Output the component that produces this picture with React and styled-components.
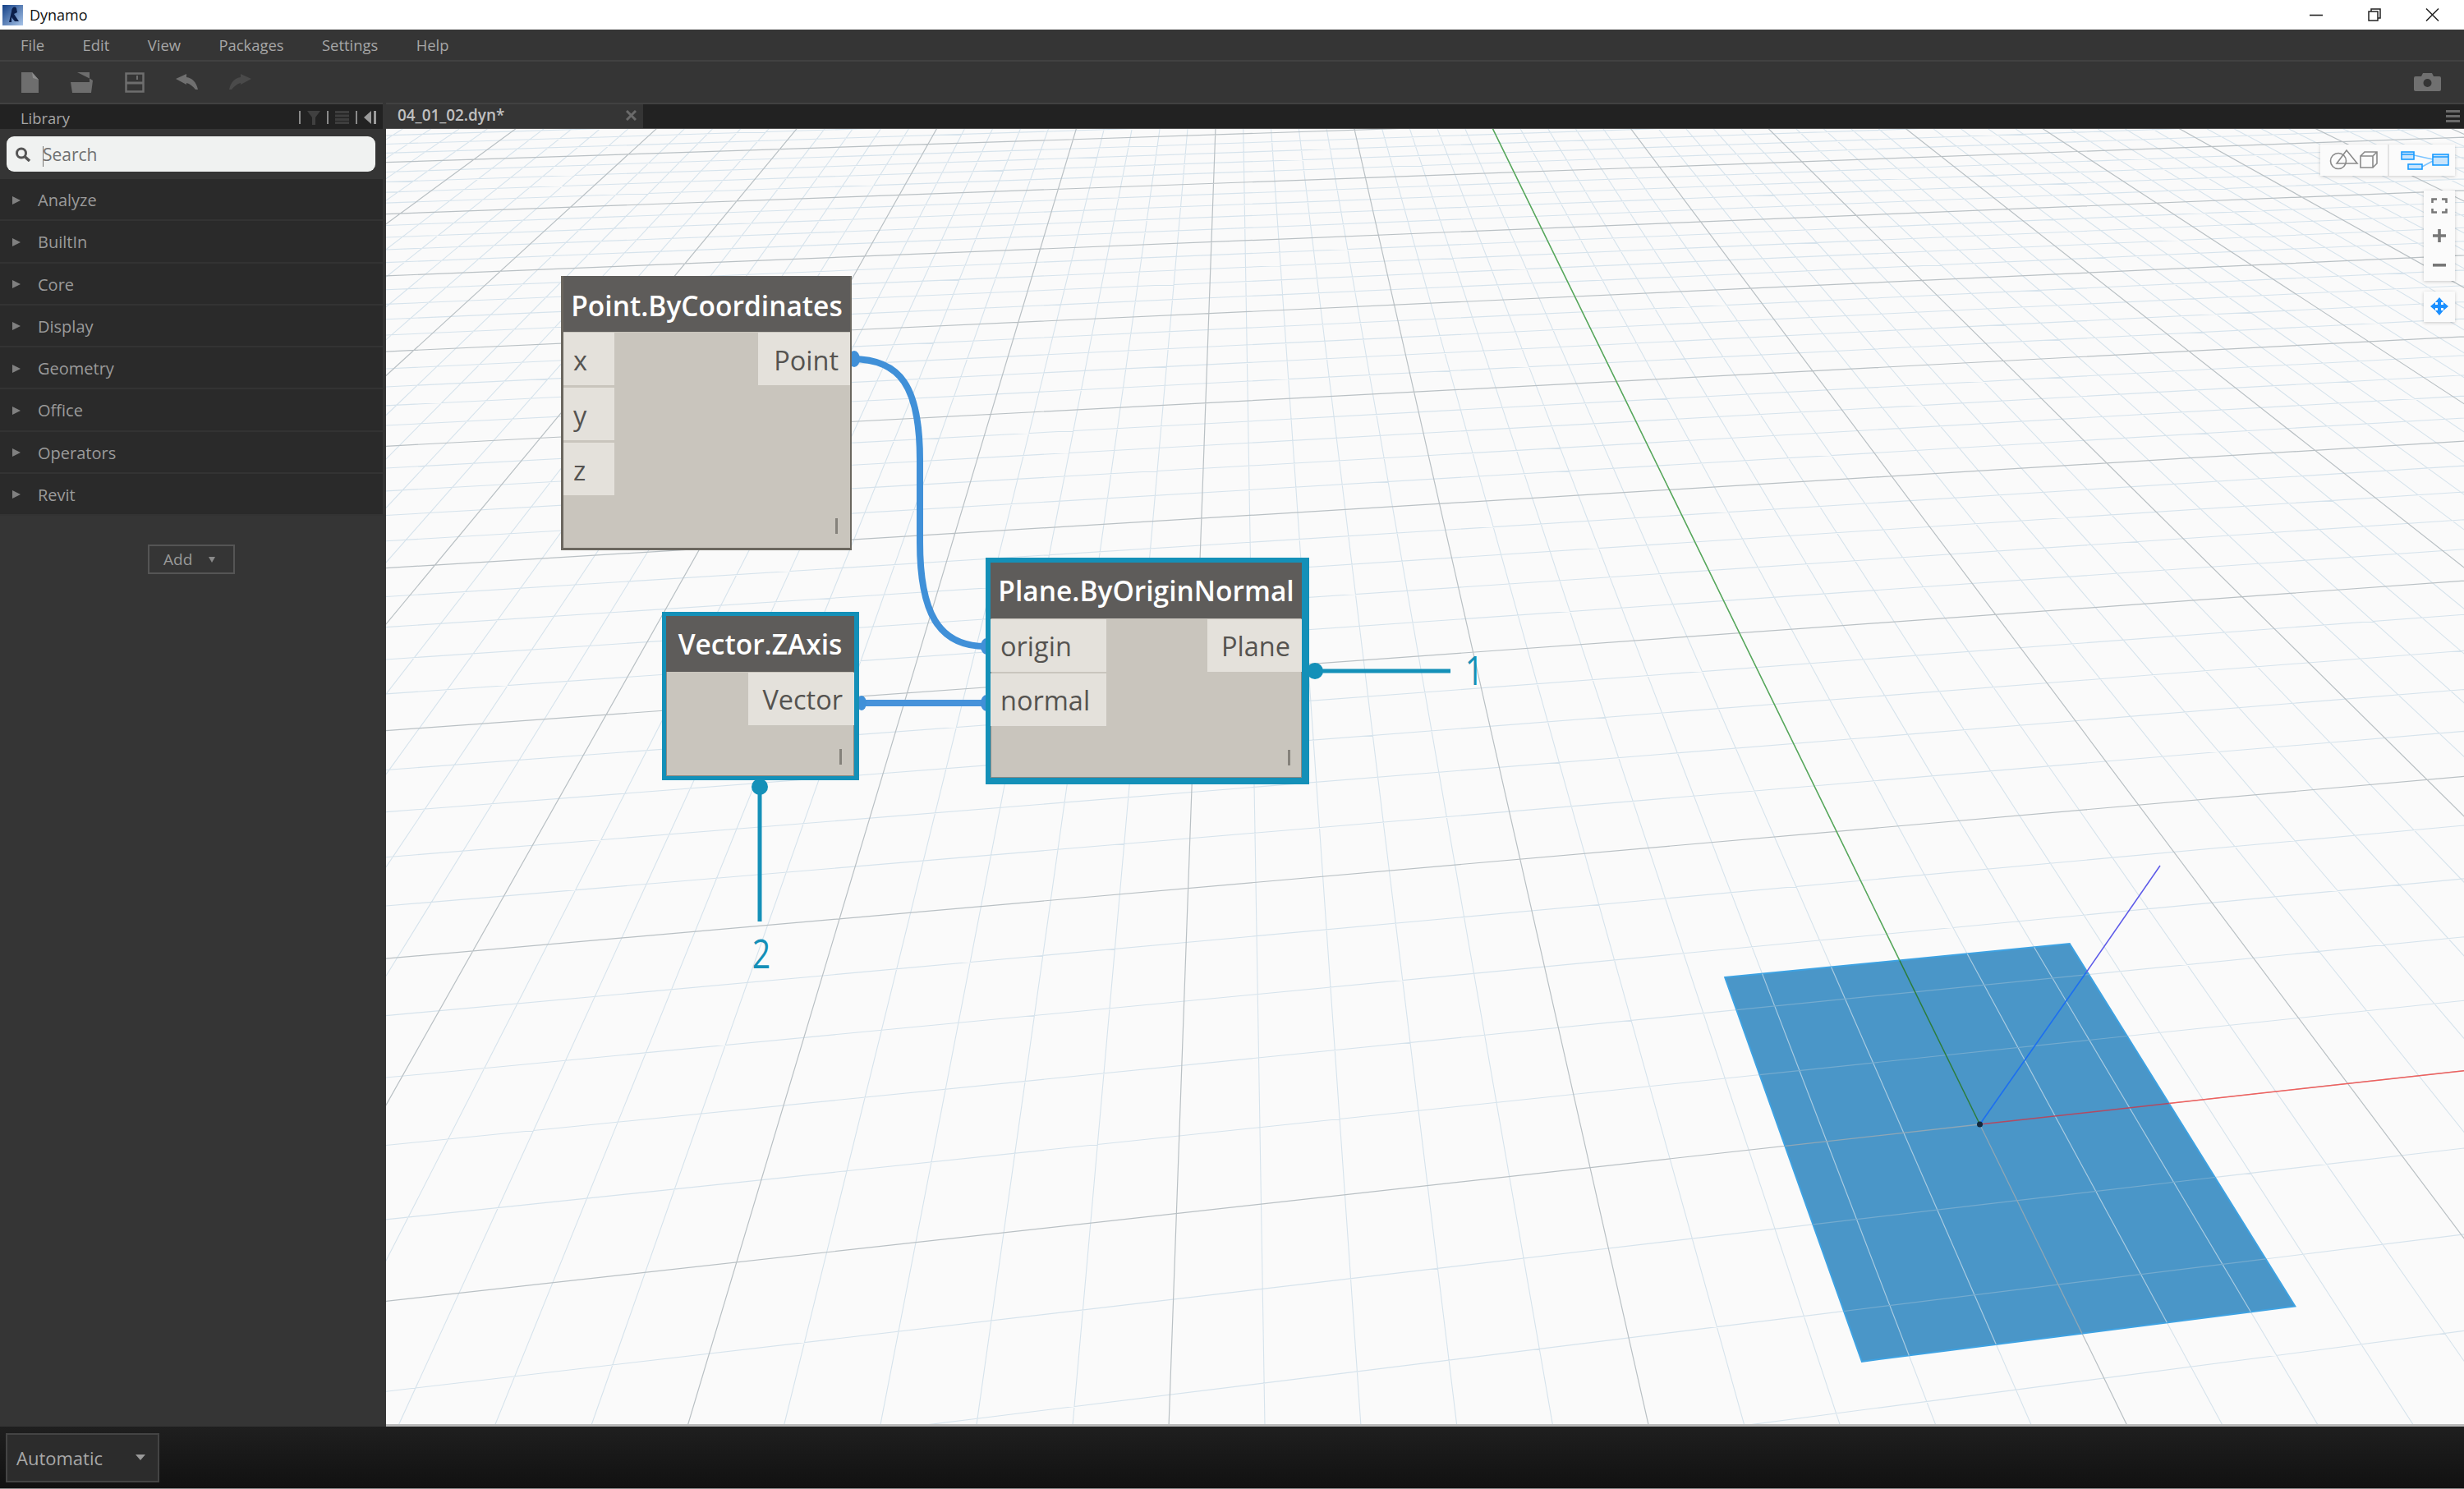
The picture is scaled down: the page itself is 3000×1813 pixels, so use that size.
import React from 'react'
import styled, { createGlobalStyle } from 'styled-components'

const GlobalStyle = createGlobalStyle`
  html, body {
    margin: 0;
    padding: 0;
    background: #1a1a1a;
  }
  * {
    box-sizing: border-box;
  }
`

const FONT = `"Open Sans", "Noto Sans", sans-serif`
const CANVAS_X = 470
const CANVAS_Y = 157

const Page = styled.div`
  display: flex;
  flex-direction: column;
  width: 3000px;
  height: 1813px;
  overflow: hidden;
  font-family: ${FONT};
`

const TitleBar = styled.div`
  display: flex;
  align-items: center;
  flex: 0 0 36px;
  background: #fff;
  padding-left: 3px;
`

const AppName = styled.span`
  margin-left: 8px;
  font-size: 18px;
  color: #111;
`

const WindowButtons = styled.div`
  display: flex;
  gap: 54px;
  margin-left: auto;
  padding-right: 30px;
`

const MenuBar = styled.nav`
  display: flex;
  align-items: center;
  gap: 46.5px;
  flex: 0 0 39px;
  padding-left: 25px;
  background: #353535;
  border-bottom: 2px solid #414141;
`

const MenuItem = styled.span`
  font-size: 18.4px;
  color: #a6a6a6;
`

const ToolBar = styled.div`
  display: flex;
  align-items: center;
  flex: 0 0 50px;
  padding: 0 28px 0 4px;
  background: #353535;
`

const ToolButton = styled.div`
  display: flex;
  align-items: center;
  justify-content: center;
  width: 64px;
  height: 100%;
`

const CameraButton = styled.div`
  display: flex;
  align-items: center;
  margin-left: auto;
`

const Workspace = styled.div`
  display: flex;
  flex: 1;
  min-height: 0;
`

const Sidebar = styled.aside`
  flex: 0 0 470px;
  display: flex;
  flex-direction: column;
  background: #353535;
`

const LibraryHeader = styled.div`
  display: flex;
  align-items: center;
  flex: 0 0 32px;
  width: 466px;
  padding: 2px 8px 0 25px;
  background: #222;
  border-top: 2px solid #414141;
`

const LibraryTitle = styled.span`
  font-size: 18.4px;
  color: #a6a6a6;
`

const LibraryTools = styled.div`
  display: flex;
  align-items: center;
  gap: 8px;
  margin-left: auto;
`

const ToolDivider = styled.span`
  width: 2px;
  height: 16px;
  background: #8a8a8a;
`

const SearchWell = styled.div`
  width: 466px;
  padding: 9px 9px 9px 8px;
`

const SearchBox = styled.div`
  position: relative;
  display: flex;
  align-items: center;
  height: 43px;
  padding-left: 10px;
  border-radius: 9px;
  background: #f0f2f1;
`

const SearchText = styled.span`
  margin-left: 14px;
  font-size: 21px;
  color: #6f7070;
`

const Caret = styled.span`
  position: absolute;
  left: 44px;
  top: 12px;
  width: 1px;
  height: 25px;
  background: #777;
`

const CategoryList = styled.div`
  display: flex;
  flex-direction: column;
  width: 466px;
`

const CategoryRow = styled.div`
  display: flex;
  align-items: center;
  height: 51.25px;
  padding: 2px 0 0 15px;
  background: #2a2a2a;
  border-bottom: 2px solid #333;
  font-size: 20px;
  color: #9a9a9a;
`

const Arrow = styled.span`
  width: 0;
  height: 0;
  margin-right: 21px;
  border-top: 5px solid transparent;
  border-bottom: 5px solid transparent;
  border-left: 10px solid #808080;
`

const AddButton = styled.div`
  display: flex;
  align-items: center;
  justify-content: space-between;
  align-self: flex-start;
  width: 106px;
  height: 36px;
  margin: 35px 0 0 180px;
  padding: 0 22px 0 17px;
  border: 2px solid #555;
  font-size: 19px;
  color: #999;
`

const SmallCaret = styled.span`
  width: 0;
  height: 0;
  border-left: 4px solid transparent;
  border-right: 4px solid transparent;
  border-top: 7px solid #8a8a8a;
`

const Main = styled.main`
  flex: 1;
  display: flex;
  flex-direction: column;
  min-width: 0;
`

const TabStrip = styled.div`
  display: flex;
  flex: 0 0 32px;
  background: #222;
  border-top: 2px solid #414141;
  border-bottom: 1px solid #505050;
`

const Tab = styled.div`
  display: flex;
  align-items: center;
  justify-content: space-between;
  width: 313px;
  padding: 0 8px 3px 14px;
  background: #353535;
  font-size: 18.9px;
  font-weight: 600;
  color: #c0c0c0;
`

const TabMenu = styled.div`
  display: flex;
  flex-direction: column;
  gap: 3px;
  margin: 7px 5px 0 auto;
`

const TabMenuBar = styled.span`
  display: block;
  width: 17px;
  height: 3px;
  background: #6a6a6a;
`

const Canvas = styled.div`
  position: relative;
  flex: 1;
  overflow: hidden;
  background: #fafafa;
  border-bottom: 3px solid #b9b9b9;
`

const SceneLayer = styled.svg`
  position: absolute;
  left: 0;
  top: 0;
  width: 2530px;
  height: 1578px;
`

const CanvasTools = styled.div`
  position: absolute;
  top: 19px;
  right: 11px;
  display: flex;
  flex-direction: column;
  align-items: flex-end;
`

const ViewSwitch = styled.div`
  display: flex;
  width: 164px;
  height: 38px;
  background: #fbfbfb;
  box-shadow: 0 1px 4px rgba(0, 0, 0, 0.18);
`

const ViewOption = styled.div`
  display: flex;
  flex: 1;
  border-left: ${(p) => (p.$divided ? '2px solid #e3e3e3' : 'none')};
`

const ZoomGroup = styled.div`
  display: flex;
  flex-direction: column;
  width: 38px;
  margin-top: 18px;
  background: #fbfbfb;
  box-shadow: 0 1px 4px rgba(0, 0, 0, 0.2);
`

const ZoomButton = styled.div`
  display: flex;
  align-items: center;
  justify-content: center;
  height: 36.6px;
`

const PanButton = styled(ZoomButton)`
  width: 38px;
  height: 37px;
  margin-top: 13px;
  background: #fbfbfb;
  box-shadow: 0 1px 4px rgba(0, 0, 0, 0.2);
`

const Node = styled.div`
  position: absolute;
  left: ${(p) => p.$x - CANVAS_X}px;
  top: ${(p) => p.$y - CANVAS_Y}px;
  width: ${(p) => p.$w}px;
  height: ${(p) => p.$h}px;
  display: flex;
  flex-direction: column;
  background: #c9c5bd;
  border-style: solid;
  border-color: ${(p) => (p.$selected ? '#1490b8' : '#6b675f')};
  border-width: ${(p) => p.$border};
  box-shadow: ${(p) => (p.$selected ? 'inset 0 0 0 1px #8d8a83' : 'none')};
`

const NodeTitle = styled.div`
  display: flex;
  align-items: center;
  justify-content: center;
  flex: 0 0 68px;
  padding-top: ${(p) => p.$nudge || 0}px;
  background: #5e5c5a;
  font-size: 33.5px;
  font-weight: 600;
  color: #fff;
  white-space: nowrap;
`

const NodeBody = styled.div`
  display: flex;
  justify-content: space-between;
  flex: 1;
  padding-top: 1px;
`

const PortColumn = styled.div`
  display: flex;
  flex-direction: column;
  gap: ${(p) => p.$gap}px;
  width: ${(p) => p.$w}px;
`

const Port = styled.div`
  display: flex;
  align-items: center;
  justify-content: ${(p) => (p.$output ? 'flex-end' : 'flex-start')};
  height: 64px;
  padding: ${(p) => p.$nudge || 0}px 14px 0 12px;
  background: #e4e1db;
  font-size: 32.5px;
  color: #555350;
`

const LacingMark = styled.span`
  position: absolute;
  right: ${(p) => p.$right}px;
  bottom: ${(p) => p.$bottom}px;
  width: 3px;
  height: 19px;
  background: #85827b;
`

const Callout = styled.span`
  position: absolute;
  left: ${(p) => p.$x - CANVAS_X}px;
  top: ${(p) => p.$y - CANVAS_Y}px;
  transform: translate(-50%, -50%) scaleX(0.8);
  font-size: 49px;
  font-weight: 400;
  line-height: 1;
  color: #1490b8;
`

const StatusBar = styled.footer`
  display: flex;
  align-items: center;
  flex: 0 0 76px;
  padding-left: 7px;
  background: linear-gradient(#1f1f1f, #111);
  border-bottom: 1px solid #888;
`

const RunSelect = styled.div`
  display: flex;
  align-items: center;
  justify-content: space-between;
  width: 187px;
  height: 60px;
  padding: 0 15px 0 11px;
  background: #2c2c2c;
  border: 2px solid #444;
  font-size: 22px;
  color: #a8a8a8;
`

const RunCaret = styled.span`
  width: 0;
  height: 0;
  border-left: 6px solid transparent;
  border-right: 6px solid transparent;
  border-top: 7px solid #9a9a9a;
`

// perspective of the ground plane: origin and its two vanishing points
const ORIGIN = [2410.5, 1369]
const VP_X = [18356, -400]
const VP_Y = [1503, -486]
const CELL_X = 0.00578
const CELL_Y = 0.0476
const PLANE_HALF = 2.535

function project(u, v) {
  const a = u * CELL_X
  const b = v * CELL_Y
  const w = 1 + a + b
  return [(ORIGIN[0] + a * VP_X[0] + b * VP_Y[0]) / w, (ORIGIN[1] + a * VP_X[1] + b * VP_Y[1]) / w]
}

function seg(u1, v1, u2, v2) {
  const [x1, y1] = project(u1, v1)
  const [x2, y2] = project(u2, v2)
  return `M${x1.toFixed(1)} ${y1.toFixed(1)}L${x2.toFixed(1)} ${y2.toFixed(1)}`
}

function buildGrid() {
  let minor = ''
  let major = ''
  for (let u = -60; u <= 60; u++) {
    const d = seg(u, -8, u, 50)
    if (u % 5 === 0) major += d
    else minor += d
  }
  for (let v = -8; v <= 50; v++) {
    const d = seg(-60, v, 60, v)
    if (v % 5 === 0) major += d
    else minor += d
  }
  return { minor, major }
}

const grid = buildGrid()
const H = PLANE_HALF

const planeOutline = [project(-H, H), project(H, H), project(H, -H), project(-H, -H)]
  .map((p) => p.map((n) => n.toFixed(1)).join(','))
  .join(' ')

const planeCellsU = [-2, -1, 1, 2].map((u) => seg(u, -H, u, H)).join('')
const planeCellsV = [-2, -1, 1, 2].map((v) => seg(-H, v, H, v)).join('')

function Scene() {
  return (
    <SceneLayer viewBox={`${CANVAS_X} ${CANVAS_Y} 2530 1578`}>
      <path d={grid.minor} stroke="#d6e3ec" strokeWidth="1.1" fill="none" />
      <path d={grid.major} stroke="#b9c0c4" strokeWidth="1.2" fill="none" />

      <polygon points={planeOutline} fill="#4a96c8" stroke="#3ea2e2" strokeWidth="2" />
      <path d={planeCellsU} stroke="#a8cbe2" strokeWidth="1.2" fill="none" />
      <path d={planeCellsV} stroke="#74abcf" strokeWidth="1.2" fill="none" />
      <path d={seg(0, -H, 0, 0) + seg(-H, 0, 0, 0)} stroke="#8fa7b6" strokeWidth="1.3" fill="none" />

      <path d={seg(0, 0, 0, H)} stroke="#2c7d3c" strokeWidth="1.5" fill="none" />
      <path d={seg(0, H, 0, 50)} stroke="#56a95a" strokeWidth="1.5" fill="none" />
      <path d={seg(0, 0, H, 0)} stroke="#b24a62" strokeWidth="1.5" fill="none" />
      <path d={seg(H, 0, 60, 0)} stroke="#f0605e" strokeWidth="1.5" fill="none" />
      <path d="M2410.5 1369L2540 1184" stroke="#1c6ff0" strokeWidth="1.6" fill="none" />
      <path d="M2540 1184L2630 1054" stroke="#5b58e8" strokeWidth="1.5" fill="none" />
      <circle cx="2410.5" cy="1369" r="3.5" fill="#10283c" />

      <path
        d="M1037 437C1096 437 1120 470 1120 560L1120 660C1120 745 1142 787 1200 787"
        stroke="#4090d8"
        strokeWidth="8"
        fill="none"
      />
      <path d="M1046 856L1200 856" stroke="#4692da" strokeWidth="8" fill="none" />
      <ellipse cx="1040" cy="437" rx="7" ry="10" fill="#4090d8" />
      <ellipse cx="1201" cy="787" rx="7" ry="10" fill="#4090d8" />
      <ellipse cx="1049" cy="856" rx="6" ry="9" fill="#4090d8" />
      <ellipse cx="1201" cy="856" rx="7" ry="10" fill="#4090d8" />

      <path d="M1594 817L1766 817M925 950L925 1122" stroke="#1490b8" strokeWidth="5" fill="none" />
      <circle cx="1601" cy="817" r="10" fill="#1490b8" />
      <circle cx="925" cy="958" r="10" fill="#1490b8" />
    </SceneLayer>
  )
}

function DynamoLogo() {
  return (
    <svg width="25" height="25" viewBox="0 0 25 25">
      <defs>
        <linearGradient id="logoFill" x1="0" y1="0" x2="1" y2="1">
          <stop offset="0" stopColor="#123f86" />
          <stop offset="1" stopColor="#a8c4e8" />
        </linearGradient>
      </defs>
      <rect width="25" height="25" fill="url(#logoFill)" />
      <path d="M8 21L11 8C11 3 15 1 17 4L18 9L14 11L20 20L15 20L11 15L11 21Z" fill="#0c1f4a" />
    </svg>
  )
}

function WindowIcons() {
  return (
    <WindowButtons>
      <svg width="18" height="16" viewBox="0 0 18 16">
        <path d="M1 8.5H17" stroke="#222" strokeWidth="1.6" />
      </svg>
      <svg width="16" height="16" viewBox="0 0 16 16" fill="none" stroke="#222" strokeWidth="1.5">
        <rect x="1" y="4" width="11" height="11" />
        <path d="M4 4V1H15V12H12" />
      </svg>
      <svg width="17" height="16" viewBox="0 0 17 16" fill="none" stroke="#222" strokeWidth="1.5">
        <path d="M1 0.5L16 15.5M16 0.5L1 15.5" />
      </svg>
    </WindowButtons>
  )
}

function NewIcon() {
  return (
    <svg width="21" height="25" viewBox="0 0 21 25">
      <path d="M0 0H13L21 9V25H0Z" fill="#6e6e6e" />
      <path d="M13 0L21 9L14 7Z" fill="#8d8d8d" />
    </svg>
  )
}

function OpenIcon() {
  return (
    <svg width="28" height="25" viewBox="0 0 28 25">
      <path d="M8 0H23V8H14V12H0L2 25H25L27 10L24 8Z" fill="#6e6e6e" />
      <path d="M14 8H23V12H14Z" fill="#353535" />
    </svg>
  )
}

function SaveIcon() {
  return (
    <svg width="24" height="25" viewBox="0 0 24 25" fill="none" stroke="#6e6e6e" strokeWidth="2.5">
      <rect x="1.5" y="1.5" width="21" height="22" />
      <path d="M1.5 13H22.5" strokeWidth="3" />
      <path d="M15 4V9" strokeWidth="2" />
    </svg>
  )
}

function UndoIcon({ flip, color }) {
  return (
    <svg width="28" height="20" viewBox="0 0 28 20" style={flip ? { transform: 'scaleX(-1)' } : undefined}>
      <path d="M0 6L13 0L13 4C20 5 25 10 27 19L24 19C21 15 17 12 13 11L13 13Z" fill={color} />
    </svg>
  )
}

function CameraIcon() {
  return (
    <svg width="33" height="22" viewBox="0 0 33 22">
      <path
        d="M2 4H9L11 0H22L24 4H31Q33 4 33 6V20Q33 22 31 22H2Q0 22 0 20V6Q0 4 2 4Z"
        fill="#707070"
      />
      <circle cx="16.5" cy="12" r="5" fill="#353535" />
    </svg>
  )
}

function SearchIcon() {
  return (
    <svg width="20" height="18" viewBox="0 0 20 18" fill="none" stroke="#555" strokeWidth="3">
      <circle cx="8" cy="7.5" r="5.5" />
      <path d="M12 11.5L18 17" strokeWidth="3.5" />
    </svg>
  )
}

function FilterIcon() {
  return (
    <svg width="16" height="17" viewBox="0 0 16 17">
      <path d="M0 0H16L10 8V17H6V8Z" fill="#404040" />
    </svg>
  )
}

function ListIcon() {
  return (
    <svg width="17" height="16" viewBox="0 0 17 16">
      <path d="M0 0H17V3H0ZM0 4.500H17V7.500H0ZM0 9H17V12H0ZM0 13H17V16H0Z" fill="#3e3e3e" />
    </svg>
  )
}

function CollapseIcon() {
  return (
    <svg width="15" height="16" viewBox="0 0 15 16">
      <path d="M9 0V16L0 8Z" fill="#9a9a9a" />
      <rect x="12" y="0" width="3" height="16" fill="#9a9a9a" />
    </svg>
  )
}

function GeometryIcon() {
  return (
    <svg width="82" height="38" viewBox="0 0 82 38" fill="none" stroke="#8a8a8a" strokeWidth="1.6">
      <circle cx="22" cy="20" r="9.5" />
      <path d="M20 23L32 7L45 23Z" />
      <path d="M49 14H64V28H49ZM49 14L54 9H69V23L64 28M64 14L69 9" />
    </svg>
  )
}

function GraphIcon() {
  return (
    <svg width="82" height="38" viewBox="0 0 82 38">
      <path d="M30 13L53 18M40 27L53 20" stroke="#7cc4ff" strokeWidth="1.6" fill="none" />
      <g fill="#c8e4fb" stroke="#1a9bff" strokeWidth="1.6">
        <rect x="15" y="9" width="15" height="9" />
        <rect x="23" y="24" width="17" height="6" />
        <rect x="53" y="12" width="19" height="13" />
      </g>
      <path d="M15 12H30M53 15H72" stroke="#1a9bff" strokeWidth="1.4" />
    </svg>
  )
}

function FitIcon() {
  return (
    <svg width="20" height="19" viewBox="0 0 20 19" fill="none" stroke="#777" strokeWidth="2.6">
      <path d="M1.500 6V1.500H7M13 1.500H18.500V6M18.500 13V17.500H13M7 17.500H1.500V13" />
    </svg>
  )
}

function PlusIcon() {
  return (
    <svg width="16" height="16" viewBox="0 0 16 16">
      <path d="M0 8H16M8 0V16" stroke="#777" strokeWidth="3.6" />
    </svg>
  )
}

function MinusIcon() {
  return (
    <svg width="16" height="4" viewBox="0 0 16 4">
      <rect width="16" height="3.6" fill="#777" />
    </svg>
  )
}

function PanIcon() {
  return (
    <svg width="22" height="22" viewBox="0 0 22 22">
      <path
        d="M11 0L16 6H13V9H16V6L22 11L16 16V13H13V16H16L11 22L6 16H9V13H6V16L0 11L6 6V9H9V6H6Z"
        fill="#1a8fff"
      />
    </svg>
  )
}

const MENU = ['File', 'Edit', 'View', 'Packages', 'Settings', 'Help']
const CATEGORIES = ['Analyze', 'BuiltIn', 'Core', 'Display', 'Geometry', 'Office', 'Operators', 'Revit']

export default function App() {
  return (
    <Page>
      <GlobalStyle />
      <TitleBar>
        <DynamoLogo />
        <AppName>Dynamo</AppName>
        <WindowIcons />
      </TitleBar>

      <MenuBar>
        {MENU.map((item) => (
          <MenuItem key={item}>{item}</MenuItem>
        ))}
      </MenuBar>

      <ToolBar>
        <ToolButton>
          <NewIcon />
        </ToolButton>
        <ToolButton>
          <OpenIcon />
        </ToolButton>
        <ToolButton>
          <SaveIcon />
        </ToolButton>
        <ToolButton>
          <UndoIcon color="#707070" />
        </ToolButton>
        <ToolButton>
          <UndoIcon flip color="#4a4a4a" />
        </ToolButton>
        <CameraButton>
          <CameraIcon />
        </CameraButton>
      </ToolBar>

      <Workspace>
        <Sidebar>
          <LibraryHeader>
            <LibraryTitle>Library</LibraryTitle>
            <LibraryTools>
              <ToolDivider />
              <FilterIcon />
              <ToolDivider />
              <ListIcon />
              <ToolDivider />
              <CollapseIcon />
            </LibraryTools>
          </LibraryHeader>
          <SearchWell>
            <SearchBox>
              <SearchIcon />
              <SearchText>Search</SearchText>
              <Caret />
            </SearchBox>
          </SearchWell>
          <CategoryList>
            {CATEGORIES.map((name) => (
              <CategoryRow key={name}>
                <Arrow />
                {name}
              </CategoryRow>
            ))}
          </CategoryList>
          <AddButton>
            Add
            <SmallCaret />
          </AddButton>
        </Sidebar>

        <Main>
          <TabStrip>
            <Tab>
              04_01_02.dyn*
              <svg width="13" height="13" viewBox="0 0 13 13" stroke="#6a6a6a" strokeWidth="3">
                <path d="M1 1L12 12M12 1L1 12" />
              </svg>
            </Tab>
            <TabMenu>
              <TabMenuBar />
              <TabMenuBar />
              <TabMenuBar />
            </TabMenu>
          </TabStrip>

          <Canvas>
            <Scene />

            <Node $x={683} $y={336} $w={354} $h={334} $border="0 2px 3px 3px">
              <NodeTitle $nudge={3}>Point.ByCoordinates</NodeTitle>
              <NodeBody>
                <PortColumn $w={62} $gap={3}>
                  <Port $nudge={3}>x</Port>
                  <Port $nudge={3}>y</Port>
                  <Port $nudge={3}>z</Port>
                </PortColumn>
                <PortColumn $w={112}>
                  <Port $output $nudge={3}>
                    Point
                  </Port>
                </PortColumn>
              </NodeBody>
              <LacingMark $right={15} $bottom={17} />
            </Node>

            <Node $selected $x={806} $y={745} $w={240} $h={205} $border="5px 6px 5px 5px">
              <NodeTitle>Vector.ZAxis</NodeTitle>
              <NodeBody>
                <span />
                <PortColumn $w={129}>
                  <Port $output>Vector</Port>
                </PortColumn>
              </NodeBody>
              <LacingMark $right={15} $bottom={14} />
            </Node>

            <Node $selected $x={1200} $y={679} $w={394} $h={276} $border="6px 9px 8px 6px">
              <NodeTitle>Plane.ByOriginNormal</NodeTitle>
              <NodeBody>
                <PortColumn $w={141} $gap={2}>
                  <Port>origin</Port>
                  <Port>normal</Port>
                </PortColumn>
                <PortColumn $w={115}>
                  <Port $output>Plane</Port>
                </PortColumn>
              </NodeBody>
              <LacingMark $right={14} $bottom={15} />
            </Node>

            <Callout $x={1795} $y={815}>
              1
            </Callout>
            <Callout $x={927} $y={1160}>
              2
            </Callout>

            <CanvasTools>
              <ViewSwitch>
                <ViewOption>
                  <GeometryIcon />
                </ViewOption>
                <ViewOption $divided>
                  <GraphIcon />
                </ViewOption>
              </ViewSwitch>
              <ZoomGroup>
                <ZoomButton>
                  <FitIcon />
                </ZoomButton>
                <ZoomButton>
                  <PlusIcon />
                </ZoomButton>
                <ZoomButton>
                  <MinusIcon />
                </ZoomButton>
              </ZoomGroup>
              <PanButton>
                <PanIcon />
              </PanButton>
            </CanvasTools>
          </Canvas>
        </Main>
      </Workspace>

      <StatusBar>
        <RunSelect>
          Automatic
          <RunCaret />
        </RunSelect>
      </StatusBar>
    </Page>
  )
}
